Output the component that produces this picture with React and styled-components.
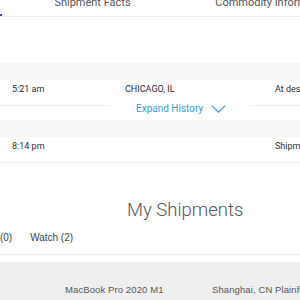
import React from 'react';
import styled, { createGlobalStyle } from 'styled-components';

const GlobalStyle = createGlobalStyle`
  html, body {
    margin: 0;
    padding: 0;
    background: #ffffff;
    overflow: hidden;
  }
  body {
    font-family: Roboto, "Liberation Sans", Arial, sans-serif;
    color: #333333;
  }
`;

const Page = styled.div`
  width: 300px;
  height: 300px;
  overflow: hidden;
`;

const TabBar = styled.div`
  display: flex;
  margin: -4px 0 0 -179px;
  border-bottom: 1px solid #eeeeee;
`;

const Tab = styled.div`
  flex: 0 0 181px;
  height: 18px;
  text-align: center;
  font-size: 11px;
  line-height: 13px;
  color: #555555;
  white-space: nowrap;
  border-bottom: 2px solid ${(p) => (p.active ? '#6a2bb5' : 'transparent')};
`;

const HistorySection = styled.div`
  margin-top: 46px;
`;

const DateBand = styled.div`
  height: 17px;
  background: #f6f6f6;
`;

const HistoryRow = styled.div`
  display: grid;
  grid-template-columns: 113px 150px 1fr;
  height: 25px;
  box-sizing: border-box;
  padding: 4px 0 0 12px;
  font-size: 9px;
  line-height: 10px;
  color: #2e2e2e;
  white-space: nowrap;
  overflow: hidden;
`;

const ExpandRow = styled.div`
  display: flex;
  align-items: flex-start;
  height: 15px;
`;

const ExpandLine = styled.div`
  flex: ${(p) => (p.grow ? '1' : `0 0 ${p.size}px`)};
  height: 1px;
  background: #eeeeee;
`;

const ExpandButton = styled.div`
  display: flex;
  align-items: center;
  gap: 8px;
  padding: 0 24px 0 25px;
  margin-top: -2px;
  color: #3d9ad8;
  font-size: 10px;
  line-height: 12px;
  white-space: nowrap;
`;

const Divider = styled.div`
  height: 1px;
  background: #eeeeee;
`;

const Title = styled.h2`
  margin: 36px 0 0 127px;
  font-size: 18.5px;
  font-weight: 300;
  line-height: 22px;
  color: #555555;
`;

const FilterBar = styled.div`
  display: flex;
  gap: 18px;
  margin-left: -14px;
  padding: 11px 0 10px;
  font-family: "Liberation Sans", Arial, sans-serif;
  font-size: 10px;
  line-height: 12px;
  color: #444444;
  border-bottom: 1px solid #eeeeee;
`;

const ShipmentRow = styled.div`
  display: grid;
  grid-template-columns: 147px 1fr;
  margin-top: 7px;
  height: 45px;
  box-sizing: border-box;
  background: #efefef;
  padding: 22px 0 0 65px;
  font-family: "Liberation Sans", Arial, sans-serif;
  font-size: 9.5px;
  line-height: 11px;
  letter-spacing: 0.1px;
  color: #555555;
  white-space: nowrap;
  overflow: hidden;
`;

const Chevron = () => (
  <svg width="15" height="8" viewBox="0 0 15 8" fill="none">
    <path d="M0.6 0.6 L7.5 7.2 L14.4 0.6" stroke="#3d9ad8" strokeWidth="1.2" />
  </svg>
);

export default function App() {
  return (
    <Page>
      <GlobalStyle />
      <TabBar>
        <Tab active>Tracking</Tab>
        <Tab>Shipment Facts</Tab>
        <Tab>Commodity Information</Tab>
      </TabBar>
      <HistorySection>
        <DateBand />
        <HistoryRow>
          <span>5:21 am</span>
          <span>CHICAGO, IL</span>
          <span>At destination sort facility</span>
        </HistoryRow>
        <ExpandRow>
          <ExpandLine size={111} />
          <ExpandButton>
            Expand History
            <Chevron />
          </ExpandButton>
          <ExpandLine grow />
        </ExpandRow>
        <DateBand />
        <HistoryRow>
          <span>8:14 pm</span>
          <span></span>
          <span>Shipment information sent</span>
        </HistoryRow>
        <Divider />
      </HistorySection>
      <Title>My Shipments</Title>
      <FilterBar>
        <span>All (0)</span>
        <span>Watch (2)</span>
      </FilterBar>
      <ShipmentRow>
        <span>MacBook Pro 2020 M1</span>
        <span>Shanghai, CN Plainfield, IN</span>
      </ShipmentRow>
    </Page>
  );
}
